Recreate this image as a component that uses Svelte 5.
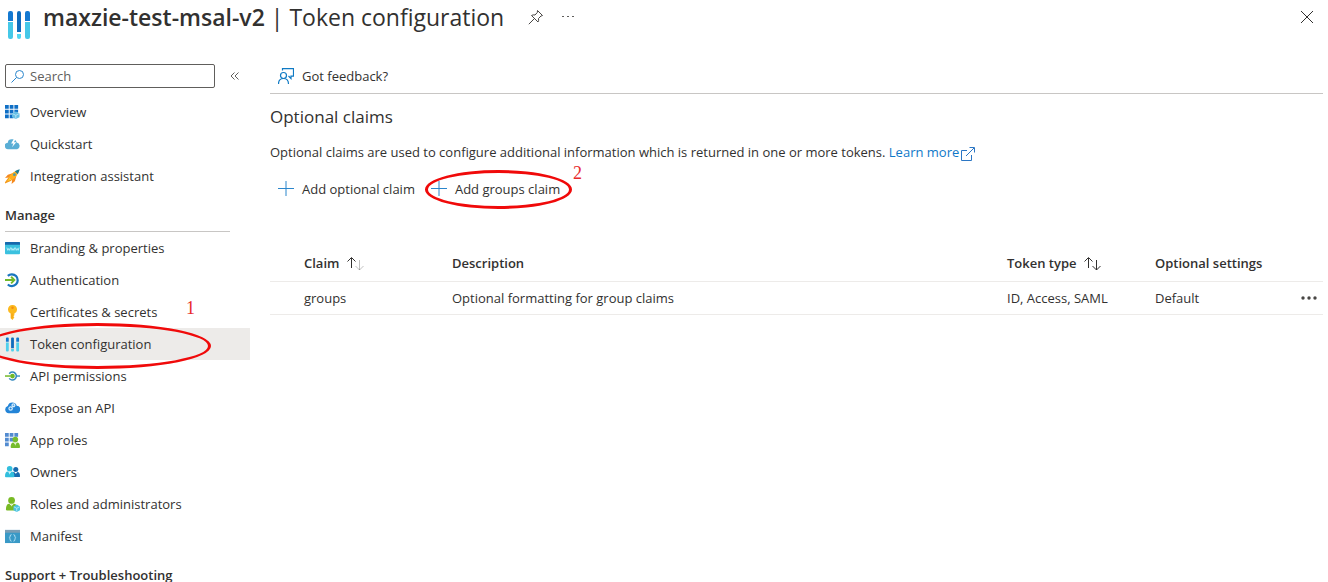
<script>
	const general = [
		{ icon: 'overview', label: 'Overview' },
		{ icon: 'quickstart', label: 'Quickstart' },
		{ icon: 'rocket', label: 'Integration assistant' }
	]

	const manage = [
		{ icon: 'branding', label: 'Branding & properties' },
		{ icon: 'auth', label: 'Authentication' },
		{ icon: 'key', label: 'Certificates & secrets', note: '1' },
		{ icon: 'token', label: 'Token configuration', active: true },
		{ icon: 'permissions', label: 'API permissions' },
		{ icon: 'cloud', label: 'Expose an API' },
		{ icon: 'roles', label: 'App roles' },
		{ icon: 'owners', label: 'Owners' },
		{ icon: 'admin', label: 'Roles and administrators' },
		{ icon: 'manifest', label: 'Manifest' }
	]

	const claims = [
		{ claim: 'groups', description: 'Optional formatting for group claims', type: 'ID, Access, SAML', settings: 'Default' }
	]
</script>

{#snippet bars()}
	<path fill="#0f78d0" d="M1 1.5q0-1 1-1h1q1 0 1 1V5H1zM12 1.5q0-1 1-1h1q1 0 1 1V5h-3z" />
	<path fill="#4fd0ec" d="M1 5.8h3v8.7q0 1-1 1H2q-1 0-1-1zM12 5.8h3v8.7q0 1-1 1h-1q-1 0-1-1z" />
	<path fill="#0f6cbd" d="M6.5 1.5q0-1 1-1h1q1 0 1 1V12h-3z" />
	<path fill="#4fd0ec" d="M6.500 12.800h3v1.700q0 1-1 1h-1q-1 0-1-1z" />
{/snippet}

{#snippet person(fill, x, y)}
	<g {fill} transform="translate({x} {y})">
		<circle cx="5" cy="3" r="3" />
		<path d="M0 11q0-5 3-5l2 2 2-2q3 0 3 5 0 1-1 1H1q-1 0-1-1z" />
	</g>
{/snippet}

{#snippet navIcon(name)}
	<svg class="icon" viewBox="0 0 16 16" aria-hidden="true">
		{#if name === 'overview'}
			<path fill="#0f6fc5" d="M0 0h4v4H0zM5 0h4v4H5zM10 0h4v4h-4zM0 5h4v4H0zM5 5h4v4H5zM0 10h4v4H0zM5 10h4v4H5z" />
			<path fill="#0f6fc5" d="M10 5h4v3h-4z" />
			<path fill="#65bfe5" d="m11.500 7 4 2v4l-4 2-4-2V9z" />
			<path fill="none" stroke="#d8f1fa" stroke-width=".7" d="m8 9.300 3.500 1.700L15 9.300M11.500 11v3.500" />
		{:else if name === 'quickstart'}
			<path fill="#5aaed5" d="M3.500 13A3.500 3.500 0 0 1 3 6a4 4 0 0 1 4-3.500 5 5 0 0 1 5.500 3.300A3.700 3.700 0 0 1 13 13z" />
			<path fill="#fff" d="m10 1-3.500 6H9l-1.500 4 4.500-5.500H9.500L12 1z" />
		{:else if name === 'rocket'}
			<path fill="#f58a1f" d="M8 4.500 3 6 0 9.500l4-.5 3.500 3.500L7 16l3.500-3L12 8z" />
			<path fill="#ffb01f" d="M14.500 1.500Q8 2 4 9l3 3q7-4 7.500-10.500z" />
			<path fill="#207e95" d="M10.500 2.300Q13 1 15.700.3 15 3 13.700 5.500z" />
			<circle cx="10" cy="6" r="1.500" fill="#4c9ba6" />
			<path stroke="#f59a1b" stroke-width="1.200" d="m4.500 9-4 5.500L6.500 12" fill="#ffcd2e" />
		{:else if name === 'branding'}
			<path fill="#3bc1df" d="M0 1h16v12q0 1-1 1H1q-1 0-1-1z" />
			<path fill="#1768ac" d="M0 2q0-1 1-1h14q1 0 1 1v2H0z" />
			<path fill="none" stroke="#c4f3fc" stroke-width=".9" d="m2 7 1 3 1-2 1 2 1-3m.5 0 1 3 1-2 1 2 1-3m.5 0 1 3 1-2 1 2 1-3" />
		{:else if name === 'auth'}
			<path fill="none" stroke="#1976be" stroke-width="2.400" d="M3 3A6.300 6.300 0 1 1 3 12.300" />
			<path fill="none" stroke="#71b929" stroke-width="2" d="M0 7.500h10M6.500 4 10 7.500 6.500 11" />
		{:else if name === 'key'}
			<path fill="#fcb91f" d="M8 0a4.700 4.700 0 0 1 2 9v2l-1 1 1 1-2 3-2-2V9a4.700 4.700 0 0 1 2-9z" />
			<circle cx="8" cy="3" r="1.300" fill="#f28d12" />
			<path stroke="#f39d17" d="M7.500 9v5" />
		{:else if name === 'token'}
			{@render bars()}
		{:else if name === 'permissions'}
			<path stroke="#4597c8" stroke-width="1.600" d="M12 7.500h4" />
			<path fill="none" stroke="#3589bd" stroke-width="1.600" d="M4.500 5a4.200 4.200 0 1 1 0 5" />
			<path stroke="#71b929" stroke-width="1.600" d="M0 7.500h6" />
			<circle cx="8" cy="7.500" r="2.500" fill="#71b929" />
		{:else if name === 'cloud'}
			<path fill="#2384d7" d="M4 13A4 4 0 0 1 3 5.200 5 5 0 0 1 12.500 5 4 4 0 0 1 12 13z" />
			<g fill="none" stroke="#d5ecfb" stroke-width="1.300"><circle cx="6" cy="8" r="1.800" /><circle cx="9" cy="4.500" r="1.500" /></g>
			<path stroke="#d5ecfb" d="m7 7 2-2" />
		{:else if name === 'roles'}
			<path fill="#528bd0" d="M0 0h4v4H0zM5 0h4v4H5zM10 0h4v4h-4zM0 5h4v4H0zM5 5h4v4H5zM0 10h4v4H0z" />
			{@render person('#76bc2d', 6, 4)}
			<path fill="#e3f4cb" d="m10 10.500 1 3 1-3z" />
		{:else if name === 'owners'}
			<g transform="translate(7 2) scale(.9)">{@render person('#1769ae', 0, 0)}</g>
			{@render person('#32bedd', 0, 1)}
			<path fill="#c9f3fc" d="m4 7.300 1 3 1-3z" />
		{:else if name === 'admin'}
			<g transform="translate(1 0) scale(1.200)">{@render person('#78ba24', 0, 0)}</g>
			<path fill="#d9f0bd" d="m6 7.500 1 3 1-3z" />
			<path fill="#4cc3e0" d="m12.500 8 3.500 2v4l-3.500 2L9 14v-4z" />
			<path fill="none" stroke="#d8f7ff" stroke-width=".7" d="m9.500 10.500 3 1.500 3-1.500M12.500 12v3.500" />
		{:else if name === 'manifest'}
			<path fill="#3999c6" d="M0 1h16v14H0z" />
			<path fill="#7a9eb5" d="M0 1h16v3H0z" />
			<path fill="none" stroke="#b9e2f5" d="M7 6q-1.500 0-1.500 1.500Q5.500 9 4.500 9.500q1 .5 1 2Q5.500 13 7 13M9 6q1.500 0 1.500 1.500 0 1.500 1 2-1 .5-1 2Q10.500 13 9 13" />
		{/if}
	</svg>
{/snippet}

{#snippet navList(items)}
	<ul>
		{#each items as item}
			<li>
				<a href="#top" class:active={item.active}>
					{@render navIcon(item.icon)}
					{item.label}
				</a>
				{#if item.note}
					<span class="note note-one">{item.note}</span>
				{/if}
				{#if item.active}
					<span class="ring ring-nav"></span>
				{/if}
			</li>
		{/each}
	</ul>
{/snippet}

{#snippet plus()}
	<svg class="icon" viewBox="0 0 16 16" aria-hidden="true">
		<path stroke="#2b86cc" d="M8 0v15M0 7.500h16" />
	</svg>
{/snippet}

{#snippet sortArrows(faded)}
	<svg class="sort" viewBox="0 0 18 14" aria-hidden="true">
		<g fill="none" stroke="#323130">
			<path d="M5.500 11V1M1.500 4.500l4-4 4 4" />
			<path d="M13.500 3v10M9.500 9l4 4 4-4" opacity={faded ? 0.3 : 1} />
		</g>
	</svg>
{/snippet}

<div class="blade" id="top">
	<header>
		<svg class="logo" viewBox="0 0 24 32" aria-hidden="true">
			<path fill="#1479d1" d="M0 2q0-2 2-2h1q2 0 2 2v8H0zM17 2q0-2 2-2h1q2 0 2 2v8h-5z" />
			<path fill="#45c8e8" d="M0 11h5v15q0 2-2 2H2q-2 0-2-2zM17 11h5v15q0 2-2 2h-1q-2 0-2-2z" />
			<path fill="#0f6cbd" d="M9 2q0-2 2-2t2 2v19H9z" />
			<path fill="#50d5f1" d="M9 23h4v3q0 2-2 2t-2-2z" />
		</svg>
		<h1><strong>maxzie-test-msal-v2</strong> | Token configuration</h1>
		<button class="pin" aria-label="Pin">
			<svg viewBox="0 0 16 16">
				<path fill="none" stroke="#484644" d="m9.500 1.500 5 5-1.500.5-2.500 2.500q.5 2-.5 3.500L3.500 6.500Q5 5.500 7 6l2.300-2.500zM6.500 9.500.800 15.200" />
			</svg>
		</button>
		<button class="more" aria-label="More">
			<svg viewBox="0 0 12 4"><path fill="#605e5c" d="M0 1h2v1H0zM5 1h2v1H5zM10 1h2v1h-2z" /></svg>
		</button>
		<button class="close" aria-label="Close">
			<svg viewBox="0 0 14 14"><path stroke="#323130" d="m1 1 12 12M13 1 1 13" /></svg>
		</button>
	</header>

	<div class="columns">
		<nav>
			<div class="search-row">
				<label class="search">
					<svg viewBox="0 0 14 14" aria-hidden="true">
						<g fill="none" stroke="#2b86cc"><circle cx="8.500" cy="5.500" r="4" /><path d="m5.500 8.500-5 5" /></g>
					</svg>
					<input type="text" placeholder="Search" aria-label="Search" />
				</label>
				<button class="collapse" aria-label="Collapse menu">
					<svg viewBox="0 0 8 8"><path fill="none" stroke="#605e5c" d="M4 .5.500 4 4 7.500M8 .5 4.500 4 8 7.500" /></svg>
				</button>
			</div>
			{@render navList(general)}
			<h2 class="lined">Manage</h2>
			{@render navList(manage)}
			<h2>Support + Troubleshooting</h2>
		</nav>

		<main>
			<div class="command-bar">
				<button class="command">
					<svg class="icon" viewBox="0 0 16 16" aria-hidden="true">
						<g fill="none" stroke="#0f7ac4" stroke-width="1.200">
							<circle cx="5.500" cy="7.500" r="3" />
							<path d="M.5 16q0-5.500 5-5.500t5 5.500M4.500 2.500V.6h11v7.500h-2.500v2.500L10.500 8" />
						</g>
					</svg>
					Got feedback?
				</button>
			</div>

			<h3>Optional claims</h3>
			<p>
				Optional claims are used to configure additional information which is returned in one or more tokens.
				<a href="#top">Learn more<svg class="external" viewBox="0 0 14 14" aria-hidden="true"><path fill="none" stroke="#2b76c4" d="M6 3.500H.5v10h10V8M5 9l8-8M8.500.5h5v5" /></svg></a>
			</p>

			<div class="actions">
				<button class="command">{@render plus()}Add optional claim</button>
				<button class="command">
					{@render plus()}Add groups claim
					<span class="ring ring-action"></span>
					<span class="note note-two">2</span>
				</button>
			</div>

			<table>
				<thead>
					<tr>
						<th class="claim">Claim {@render sortArrows(true)}</th>
						<th>Description</th>
						<th class="type">Token type {@render sortArrows(false)}</th>
						<th class="settings">Optional settings</th>
						<th class="menu"></th>
					</tr>
				</thead>
				<tbody>
					{#each claims as row}
						<tr>
							<td class="claim">{row.claim}</td>
							<td>{row.description}</td>
							<td>{row.type}</td>
							<td>{row.settings}</td>
							<td class="menu">
								<button aria-label="Row menu">
									<svg viewBox="0 0 18 4"><g fill="#484644"><circle cx="3" cy="2" r="1.700" /><circle cx="9" cy="2" r="1.700" /><circle cx="15" cy="2" r="1.700" /></g></svg>
								</button>
							</td>
						</tr>
					{/each}
				</tbody>
			</table>
		</main>
	</div>
</div>

<style>
	:global(body) {
		background: #fff;
	}

	.blade {
		height: 100vh;
		overflow: hidden;
		color: #323130;
		font: 13px/20px "Open Sans", "Noto Sans", sans-serif;
	}

	svg {
		display: block;
		flex: none;
	}

	button {
		display: flex;
		align-items: center;
		padding: 0;
		border: 0;
		background: none;
		color: inherit;
		font: inherit;
		cursor: pointer;
	}

	a {
		color: #0f78c8;
		text-decoration: none;
	}

	header {
		display: flex;
		align-items: flex-start;
		height: 64px;
		padding: 0 14px 0 8px;
		box-sizing: border-box;
	}

	.logo {
		width: 24px;
		height: 32px;
		margin: 11px 11px 0 0;
	}

	h1 {
		margin: 0;
		font-size: 23px;
		font-weight: 400;
		line-height: 34px;
		white-space: nowrap;
	}

	strong {
		font-weight: 600;
	}

	header button {
		height: 34px;
	}

	.pin {
		margin-left: 24px;
	}

	.pin svg {
		width: 16px;
		height: 16px;
	}

	.more {
		margin-left: 18px;
	}

	.more svg {
		width: 12px;
		height: 4px;
	}

	.close {
		margin-left: auto;
	}

	.close svg {
		width: 14px;
		height: 14px;
	}

	.columns {
		display: grid;
		grid-template-columns: 250px 1fr;
		column-gap: 20px;
		padding-right: 5px;
	}

	.search-row {
		display: flex;
		align-items: center;
		gap: 15px;
		padding: 0 0 8px 5px;
	}

	.search {
		display: flex;
		align-items: center;
		gap: 5px;
		box-sizing: border-box;
		width: 210px;
		height: 24px;
		padding-left: 5px;
		border: 1px solid #605e5c;
		border-radius: 2px;
	}

	.search svg {
		width: 14px;
		height: 14px;
	}

	.search input {
		flex: 1;
		min-width: 0;
		padding: 0;
		border: 0;
		outline: 0;
		background: none;
		font: inherit;
	}

	.search input::placeholder {
		color: #605e5c;
	}

	.collapse svg {
		width: 9px;
		height: 8px;
	}

	ul {
		margin: 0;
		padding: 0;
		list-style: none;
	}

	li {
		position: relative;
	}

	li a {
		display: flex;
		align-items: center;
		gap: 10px;
		height: 32px;
		padding-left: 5px;
		color: inherit;
	}

	li a.active {
		background: #edebe9;
	}

	.icon {
		width: 15px;
		height: 15px;
	}

	h2 {
		margin: 0 20px 0 5px;
		padding: 13px 0 6px;
		border-bottom: 1px solid transparent;
		font-size: 13px;
		font-weight: 600;
		line-height: 20px;
	}

	h2.lined {
		border-color: #c8c6c4;
	}

	.ring {
		position: absolute;
		box-sizing: border-box;
		border: 3px solid #f00a0a;
		border-radius: 50%;
		pointer-events: none;
	}

	.ring-nav {
		z-index: 1;
		top: -5px;
		left: -16px;
		width: 227px;
		height: 46px;
	}

	.ring-action {
		top: -9px;
		left: -6px;
		width: 147px;
		height: 39px;
	}

	.note {
		position: absolute;
		color: #e8292b;
		font: 18px/20px "Liberation Serif", serif;
	}

	.note-one {
		top: 2px;
		left: 186px;
	}

	.note-two {
		top: -16px;
		left: 142px;
	}

	.command-bar {
		display: flex;
		height: 29px;
		padding-left: 8px;
		border-bottom: 1px solid #c8c6c4;
	}

	.command {
		position: relative;
		gap: 8px;
	}

	.command .icon {
		width: 16px;
		height: 16px;
	}

	.command-bar .command {
		height: 24px;
	}

	h3 {
		margin: 11px 0 13px;
		font-size: 17px;
		font-weight: 400;
		line-height: 24px;
	}

	p {
		margin: 0;
	}

	.external {
		display: inline-block;
		width: 14px;
		height: 14px;
		margin-left: 2px;
		vertical-align: -4px;
	}

	.actions {
		display: flex;
		gap: 16px;
		height: 20px;
		margin: 17px 0 46px;
		padding-left: 8px;
	}

	table {
		width: 100%;
		border-collapse: collapse;
		table-layout: fixed;
	}

	th,
	td {
		padding: 0;
		border-bottom: 1px solid #edebe9;
		text-align: left;
		white-space: nowrap;
	}

	th {
		height: 36px;
		font-weight: 600;
	}

	td {
		height: 32px;
	}

	.claim {
		width: 148px;
		padding-left: 34px;
	}

	.type {
		width: 148px;
	}

	.settings {
		width: 145px;
	}

	.menu {
		width: 23px;
	}

	.menu svg {
		width: 18px;
		height: 4px;
	}

	.sort {
		display: inline-block;
		width: 18px;
		height: 14px;
		margin-left: 3px;
		vertical-align: -3px;
	}
</style>
